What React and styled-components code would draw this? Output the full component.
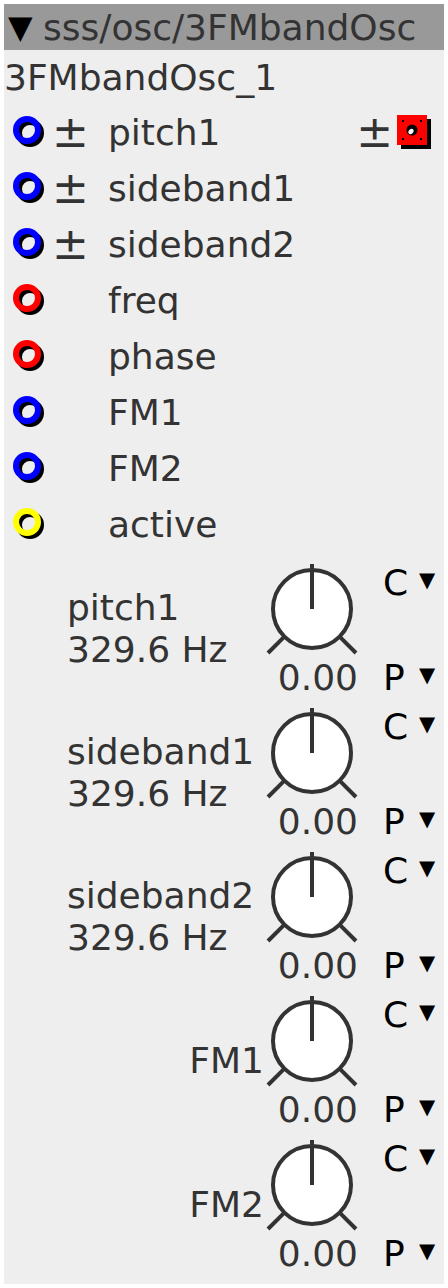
import React from 'react';
import styled, { createGlobalStyle } from 'styled-components';

const GlobalStyle = createGlobalStyle`
  html, body {
    margin: 0;
    background: #fff;
  }
  body {
    font-family: "DejaVu Sans", "Liberation Sans", sans-serif;
  }
`;

//Styled components

const Panel = styled.div`
  margin: 4px;
  width: 440px;
  height: 1280px;
  background: #eee;
  color: #333;
  font-size: 36px;
  overflow: hidden;
`;

const Header = styled.div`
  height: 46px;
  background: #999;
  display: flex;
  align-items: center;
  padding-left: 4px;
`;

const Arrow = styled.span`
  color: #000;
  font-size: 32px;
  width: 35px;
`;

const Title = styled.div`
  height: 54px;
  display: flex;
  align-items: center;
`;

const PortRow = styled.div`
  height: 56px;
  display: flex;
  align-items: center;
`;

const IconSlot = styled.div`
  width: 48px;
  padding-left: 5px;
  box-sizing: border-box;
  display: flex;
  align-items: center;
`;

const PlusSlot = styled.span`
  width: 56px;
  font-size: 44px;
  line-height: 1;
`;

const PortName = styled.span``;

const Controls = styled.div`
  margin-left: auto;
  margin-right: 12px;
  display: flex;
  align-items: center;
`;

const ControlPlus = styled.span`
  font-size: 44px;
  line-height: 1;
  margin-right: 4px;
`;

const KnobList = styled.div`
  margin-top: 10px;
`;

const KnobRow = styled.div`
  height: 134px;
  margin-bottom: 10px;
  padding-left: 63px;
  display: flex;
  align-items: center;
`;

const LabelBox = styled.div`
  width: 197px;
  margin-right: 2px;
  line-height: 42px;
  text-align: ${(props) => props.align};
`;

const KnobCol = styled.div`
  width: 94px;
  height: 134px;
  display: flex;
  flex-direction: column;
`;

const Value = styled.div`
  height: 36px;
  line-height: 36px;
  padding-right: 2px;
  text-align: right;
`;

const SideCol = styled.div`
  margin-left: 23px;
  height: 134px;
  display: flex;
  flex-direction: column;
  justify-content: space-between;
  color: #000;
`;

const SideLine = styled.div`
  height: 36px;
  line-height: 36px;
  margin-top: ${(props) => props.top || 0}px;
  white-space: nowrap;
`;

const Letter = styled.span`
  display: inline-block;
  width: 36px;
`;

const Caret = styled.span`
  font-size: 21px;
  line-height: 1;
  vertical-align: 8px;
`;

const ports = [
  { name: 'pitch1', color: '#00f', plus: true, control: true },
  { name: 'sideband1', color: '#00f', plus: true },
  { name: 'sideband2', color: '#00f', plus: true },
  { name: 'freq', color: '#f00' },
  { name: 'phase', color: '#f00' },
  { name: 'FM1', color: '#00f' },
  { name: 'FM2', color: '#00f' },
  { name: 'active', color: '#ff0' },
];

const knobs = [
  { name: 'pitch1', sub: '329.6 Hz' },
  { name: 'sideband1', sub: '329.6 Hz' },
  { name: 'sideband2', sub: '329.6 Hz' },
  { name: 'FM1' },
  { name: 'FM2' },
];

const PortIcon = ({ color }) => (
  <svg width="40" height="40" viewBox="0 0 40 40">
    <circle cx="21" cy="21" r="11" fill="none" stroke="#000" strokeWidth="6" />
    <circle cx="18" cy="18" r="11" fill="none" stroke={color} strokeWidth="6" />
  </svg>
);

const RedBox = () => (
  <svg width="35" height="35" viewBox="0 0 35 35">
    <rect x="4" y="4" width="30" height="30" fill="#000" />
    <rect x="0" y="0" width="30" height="30" fill="#f00" />
    <rect x="5" y="5" width="2" height="2" fill="#000" />
    <rect x="23" y="5" width="2" height="2" fill="#000" />
    <rect x="5" y="23" width="2" height="2" fill="#000" />
    <rect x="23" y="23" width="2" height="2" fill="#000" />
    <circle cx="15" cy="15" r="5.5" fill="#000" />
    <ellipse cx="14" cy="16.5" rx="2.2" ry="3" transform="rotate(40 14 16.5)" fill="#fff" />
  </svg>
);

const Knob = () => (
  <svg width="94" height="98" viewBox="0 0 94 98">
    <circle cx="46" cy="47" r="39" fill="#fff" stroke="#333" strokeWidth="4" />
    <line x1="46" y1="2" x2="46" y2="47" stroke="#333" strokeWidth="4" />
    <line x1="18.4" y1="74.6" x2="2" y2="91" stroke="#333" strokeWidth="4" />
    <line x1="73.6" y1="74.6" x2="90" y2="91" stroke="#333" strokeWidth="4" />
  </svg>
);

export default function App() {
  return (
    <>
      <GlobalStyle />
      <Panel>
        <Header>
          <Arrow>▼</Arrow>
          <span>sss/osc/3FMbandOsc</span>
        </Header>
        <Title>3FMbandOsc_1</Title>
        {ports.map((p) => (
          <PortRow key={p.name}>
            <IconSlot>
              <PortIcon color={p.color} />
            </IconSlot>
            <PlusSlot>{p.plus ? '±' : ''}</PlusSlot>
            <PortName>{p.name}</PortName>
            {p.control && (
              <Controls>
                <ControlPlus>±</ControlPlus>
                <RedBox />
              </Controls>
            )}
          </PortRow>
        ))}
        <KnobList>
          {knobs.map((k) => (
            <KnobRow key={k.name}>
              <LabelBox align={k.sub ? 'left' : 'right'}>
                <div>{k.name}</div>
                {k.sub && <div>{k.sub}</div>}
              </LabelBox>
              <KnobCol>
                <Knob />
                <Value>0.00</Value>
              </KnobCol>
              <SideCol>
                <SideLine top={3}>
                  <Letter>C</Letter>
                  <Caret>▼</Caret>
                </SideLine>
                <SideLine>
                  <Letter>P</Letter>
                  <Caret>▼</Caret>
                </SideLine>
              </SideCol>
            </KnobRow>
          ))}
        </KnobList>
      </Panel>
    </>
  );
}
